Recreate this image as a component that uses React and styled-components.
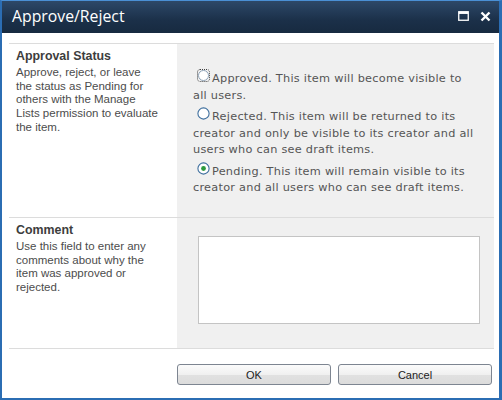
import styled, { createGlobalStyle } from 'styled-components';

const GlobalStyle = createGlobalStyle`
  html, body {
    margin: 0;
    padding: 0;
    background: #ffffff;
  }
  * {
    box-sizing: border-box;
  }
`;

const Window = styled.div`
  width: 502px;
  height: 400px;
  display: flex;
  flex-direction: column;
  background: #ffffff;
  border-left: 2px solid #2b6db3;
  border-right: 3px solid #2b6db3;
  border-bottom: 2px solid #2b6db3;
  border-top: 1px solid #4a8fd4;
  overflow: hidden;
`;

const TitleBar = styled.div`
  height: 32px;
  flex: none;
  display: flex;
  align-items: center;
  justify-content: space-between;
  padding: 0 7px 2px 10px;
  background: linear-gradient(#2d4868, #1b3049 60%, #172a40);
`;

const Title = styled.div`
  font-family: 'Open Sans', 'Liberation Sans', sans-serif;
  font-size: 15.8px;
  color: #ffffff;
`;

const TitleButtons = styled.div`
  display: flex;
  align-items: center;
  gap: 11px;
  margin-right: 1px;
`;

const Body = styled.div`
  flex: 1;
  display: flex;
  flex-direction: column;
  padding: 10px 5px 0 7px;
`;

const Section = styled.div`
  display: grid;
  grid-template-columns: 168px 1fr;
  height: ${p => p.$height}px;
  border-top: 1px solid #dcdcdc;
`;

const Label = styled.div`
  padding: 5px 19px 0 7px;
  font-family: 'Liberation Sans', Arial, sans-serif;
  color: #4c4c4c;
`;

const Heading = styled.div`
  font-weight: bold;
  font-size: 12.4px;
  color: #3d3d3d;
  margin-bottom: 3px;
`;

const Description = styled.div`
  font-size: 11.5px;
  line-height: 13.7px;
`;

const Field = styled.div`
  background: #f0f0f0;
  padding: ${p => p.$pad};
  font-family: 'DejaVu Sans', Verdana, sans-serif;
  font-size: 11.3px;
  letter-spacing: 0.25px;
  color: #555555;
`;

const Option = styled.div`
  line-height: 16.5px;
  margin-bottom: 5px;
`;

/* negative margins keep the radio from growing the line box */
const Radio = styled.svg`
  width: 13px;
  height: 13px;
  margin: -4px 2px -4px 4px;
  vertical-align: 4px;
`;

const CommentBox = styled.textarea`
  display: block;
  width: 282px;
  height: 88px;
  border: 1px solid #c4c4c4;
  background: #ffffff;
  resize: none;
  outline: none;
`;

const Footer = styled.div`
  border-top: 1px solid #dcdcdc;
  display: flex;
  justify-content: flex-end;
  gap: 7px;
  padding: 15px 2px 0 0;
`;

const Button = styled.button`
  width: 154px;
  height: 21px;
  border: 1px solid #7d8591;
  border-radius: 3px;
  background: linear-gradient(#fbfbfb, #f0f0f0 50%, #e1e1e1 51%, #dcdcdc);
  font-family: 'Liberation Sans', Arial, sans-serif;
  font-size: 11px;
  color: #222222;
  padding: 0;
`;

function RadioIcon({ state }) {
  if (state === 'focus') {
    return (
      <Radio viewBox="0 0 13 13">
        <circle cx="6.5" cy="6.5" r="5" fill="#ffffff" stroke="#8fa3b8" />
        <rect x="0.5" y="0.5" width="12" height="12" rx="2.5" fill="none"
          stroke="#444" strokeDasharray="1 1" />
      </Radio>
    );
  }
  return (
    <Radio viewBox="0 0 13 13">
      <circle cx="6.5" cy="6.5" r="5.6" fill="#ffffff" stroke="#3f6f9e" strokeWidth="1.1" />
      {state === 'on' && <circle cx="6.5" cy="6.5" r="2.4" fill="#2e9a3e" />}
    </Radio>
  );
}

const options = [
  { state: 'focus', name: 'Approved', text: 'Approved. This item will become visible to all users.' },
  { state: 'off', name: 'Rejected', text: 'Rejected. This item will be returned to its creator and only be visible to its creator and all users who can see draft items.' },
  { state: 'on', name: 'Pending', text: 'Pending. This item will remain visible to its creator and all users who can see draft items.' },
];

export default function App() {
  return (
    <>
      <GlobalStyle />
      <Window>
        <TitleBar>
          <Title>Approve/Reject</Title>
          <TitleButtons>
            <svg width="11" height="10" viewBox="0 0 11 10">
              <rect x="0.75" y="0.75" width="9.5" height="8.5" fill="none" stroke="#fff" strokeWidth="1.3" />
              <rect x="0.75" y="0.75" width="9.5" height="2.2" fill="#fff" />
            </svg>
            <svg width="11" height="11" viewBox="0 0 11 11">
              <path d="M1.5 1.5 L9.5 9.5 M9.5 1.5 L1.5 9.5" stroke="#fff" strokeWidth="2.4" />
            </svg>
          </TitleButtons>
        </TitleBar>
        <Body>
          <Section $height={174}>
            <Label>
              <Heading>Approval Status</Heading>
              <Description>
                Approve, reject, or leave the status as Pending for others with the Manage
                Lists permission to evaluate the item.
              </Description>
            </Label>
            <Field $pad="27px 16px 0 16px">
              {options.map(o => (
                <Option key={o.name}>
                  <RadioIcon state={o.state} />
                  {o.text}
                </Option>
              ))}
            </Field>
          </Section>
          <Section $height={131}>
            <Label>
              <Heading>Comment</Heading>
              <Description>
                Use this field to enter any comments about why the item was approved or
                rejected.
              </Description>
            </Label>
            <Field $pad="18px 0 0 21px">
              <CommentBox />
            </Field>
          </Section>
          <Footer>
            <Button>OK</Button>
            <Button>Cancel</Button>
          </Footer>
        </Body>
      </Window>
    </>
  );
}
